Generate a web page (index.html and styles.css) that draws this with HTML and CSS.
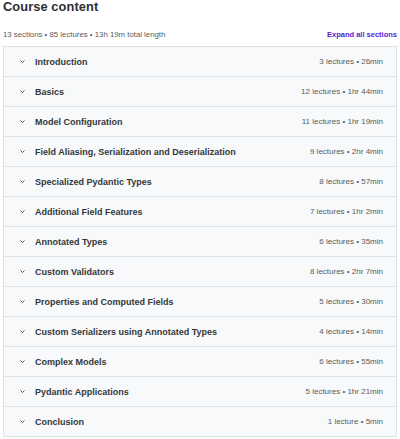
FILE: index.html
```html
<!DOCTYPE html>
<html lang="en">
<head>
    <meta charset="UTF-8">
    <meta name="viewport" content="width=device-width, initial-scale=1.0">
    <title>Course content</title>
    <link rel="stylesheet" href="styles.css">
</head>
<body>
    <div class="curriculum">
        <h2 class="title">Course content</h2>

        <div class="summary">
            <span>13 sections • 85 lectures • 13h 19m total length</span>
            <button type="button" class="expand">Expand all sections</button>
        </div>

        <!-- Список розділів -->
        <div class="sections">
            <div class="section">
                <svg class="chevron" viewBox="0 0 10 6"><path d="M1 1l4 4 4-4"/></svg>
                <span class="name">Introduction</span>
                <span class="stats">3 lectures • 26min</span>
            </div>
            <div class="section">
                <svg class="chevron" viewBox="0 0 10 6"><path d="M1 1l4 4 4-4"/></svg>
                <span class="name">Basics</span>
                <span class="stats">12 lectures • 1hr 44min</span>
            </div>
            <div class="section">
                <svg class="chevron" viewBox="0 0 10 6"><path d="M1 1l4 4 4-4"/></svg>
                <span class="name">Model Configuration</span>
                <span class="stats">11 lectures • 1hr 19min</span>
            </div>
            <div class="section">
                <svg class="chevron" viewBox="0 0 10 6"><path d="M1 1l4 4 4-4"/></svg>
                <span class="name">Field Aliasing, Serialization and Deserialization</span>
                <span class="stats">9 lectures • 2hr 4min</span>
            </div>
            <div class="section">
                <svg class="chevron" viewBox="0 0 10 6"><path d="M1 1l4 4 4-4"/></svg>
                <span class="name">Specialized Pydantic Types</span>
                <span class="stats">8 lectures • 57min</span>
            </div>
            <div class="section">
                <svg class="chevron" viewBox="0 0 10 6"><path d="M1 1l4 4 4-4"/></svg>
                <span class="name">Additional Field Features</span>
                <span class="stats">7 lectures • 1hr 2min</span>
            </div>
            <div class="section">
                <svg class="chevron" viewBox="0 0 10 6"><path d="M1 1l4 4 4-4"/></svg>
                <span class="name">Annotated Types</span>
                <span class="stats">6 lectures • 35min</span>
            </div>
            <div class="section">
                <svg class="chevron" viewBox="0 0 10 6"><path d="M1 1l4 4 4-4"/></svg>
                <span class="name">Custom Validators</span>
                <span class="stats">8 lectures • 2hr 7min</span>
            </div>
            <div class="section">
                <svg class="chevron" viewBox="0 0 10 6"><path d="M1 1l4 4 4-4"/></svg>
                <span class="name">Properties and Computed Fields</span>
                <span class="stats">5 lectures • 30min</span>
            </div>
            <div class="section">
                <svg class="chevron" viewBox="0 0 10 6"><path d="M1 1l4 4 4-4"/></svg>
                <span class="name">Custom Serializers using Annotated Types</span>
                <span class="stats">4 lectures • 14min</span>
            </div>
            <div class="section">
                <svg class="chevron" viewBox="0 0 10 6"><path d="M1 1l4 4 4-4"/></svg>
                <span class="name">Complex Models</span>
                <span class="stats">6 lectures • 55min</span>
            </div>
            <div class="section">
                <svg class="chevron" viewBox="0 0 10 6"><path d="M1 1l4 4 4-4"/></svg>
                <span class="name">Pydantic Applications</span>
                <span class="stats">5 lectures • 1hr 21min</span>
            </div>
            <div class="section">
                <svg class="chevron" viewBox="0 0 10 6"><path d="M1 1l4 4 4-4"/></svg>
                <span class="name">Conclusion</span>
                <span class="stats">1 lecture • 5min</span>
            </div>
        </div>
    </div>
</body>
</html>
```

FILE: styles.css
```css
body, html {
    margin: 0;
    background-color: #fff;
    color: #2d2f31;
    font-family: "Liberation Sans", Arial, sans-serif;
}

.curriculum {
    padding: 0 3px;
}

.title {
    margin: 0;
    font-size: 12.8px;
    line-height: 13px;
    font-weight: 700;
    letter-spacing: 0.1px;
}

.summary {
    display: flex;
    justify-content: space-between;
    align-items: center;
    margin-top: 14px;
    height: 14px;
    font-size: 7.8px;
    color: #595c60;
}

.expand {
    padding: 0;
    border: none;
    background: none;
    font-family: inherit;
    font-size: 7.5px;
    font-weight: 700;
    color: #5624d0;
    cursor: pointer;
}

.sections {
    margin-top: 5px;
    border: 1px solid #dde2e6;
}

.section {
    display: flex;
    align-items: center;
    height: 29px;
    padding: 0 13px 0 16px;
    background-color: #f7f9fa;
    border-bottom: 1px solid #dde2e6;
}

.section:last-child {
    border-bottom: none;
}

.chevron {
    width: 5px;
    height: 3px;
    fill: none;
    stroke: #2d2f31;
    stroke-width: 1.6;
    margin-right: 10px;
}

.name {
    flex: 1;
    font-size: 9px;
    font-weight: 700;
    color: #34373a;
}

.stats {
    font-size: 8px;
    color: #595c60;
}
```
